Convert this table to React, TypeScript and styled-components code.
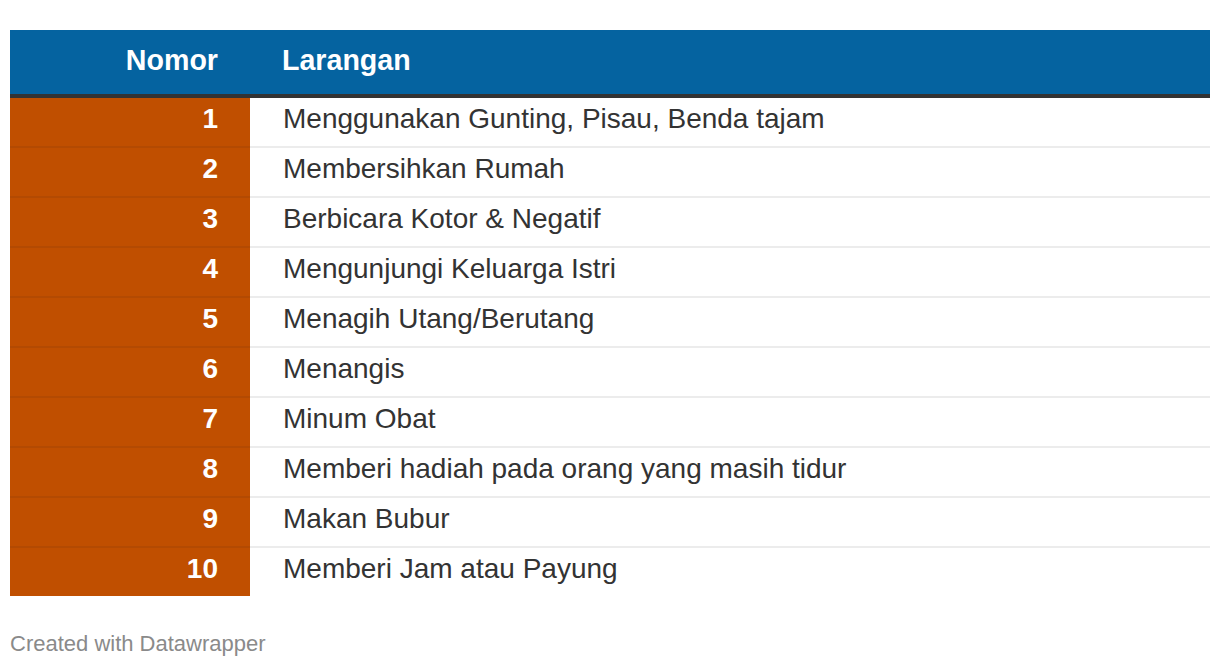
import React from "react";
import styled, { createGlobalStyle } from "styled-components";

const Global = createGlobalStyle`
  html, body { margin: 0; padding: 0; background: #fff; }
  body { font-family: "Liberation Sans", Arial, Helvetica, sans-serif; }
`;

const Page = styled.div`
  padding: 30px 10px 0 10px;
`;

const Table = styled.table`
  width: 1200px;
  border-collapse: collapse;
  border-spacing: 0;
  font-size: 28px;
  line-height: 32px;
`;

const HeadRow = styled.tr`
  background: #0563a0;
  border-bottom: 4px solid #333;
`;

const Th = styled.th<{ $num?: boolean }>`
  height: 64px;
  box-sizing: border-box;
  padding: 14px ${(p) => (p.$num ? "32px" : "0")} 18px ${(p) => (p.$num ? "0" : "32px")};
  width: ${(p) => (p.$num ? "240px" : "auto")};
  text-align: ${(p) => (p.$num ? "right" : "left")};
  color: #fff;
  font-size: 28.6px;
  font-weight: 700;
  vertical-align: top;
`;

const Row = styled.tr<{ $last?: boolean }>`
  & > td {
    border-bottom: ${(p) => (p.$last ? "none" : "2px solid")};
  }
`;

const NumCell = styled.td`
  background: #c04f00;
  border-bottom-color: #b34a02 !important;
  color: #fff;
  font-weight: 700;
  text-align: right;
  padding: 5px 32px 11px 0;
  height: 48px;
  box-sizing: border-box;
  vertical-align: top;
`;

const TextCell = styled.td`
  color: #333;
  border-bottom-color: #ececec !important;
  text-align: left;
  padding: 5px 0 11px 33px;
  height: 48px;
  box-sizing: border-box;
  vertical-align: top;
`;

const Footer = styled.div`
  margin-top: 35px;
  font-size: 22px;
  line-height: 26px;
  color: #8a8a8a;
`;

const items = [
  "Menggunakan Gunting, Pisau, Benda tajam",
  "Membersihkan Rumah",
  "Berbicara Kotor & Negatif",
  "Mengunjungi Keluarga Istri",
  "Menagih Utang/Berutang",
  "Menangis",
  "Minum Obat",
  "Memberi hadiah pada orang yang masih tidur",
  "Makan Bubur",
  "Memberi Jam atau Payung",
];

export default function App() {
  return (
    <>
      <Global />
      <Page>
        <Table>
          <thead>
            <HeadRow>
              <Th $num>Nomor</Th>
              <Th>Larangan</Th>
            </HeadRow>
          </thead>
          <tbody>
            {items.map((t, i) => (
              <Row key={i} $last={i === items.length - 1}>
                <NumCell>{i + 1}</NumCell>
                <TextCell>{t}</TextCell>
              </Row>
            ))}
          </tbody>
        </Table>
        <Footer>Created with Datawrapper</Footer>
      </Page>
    </>
  );
}
